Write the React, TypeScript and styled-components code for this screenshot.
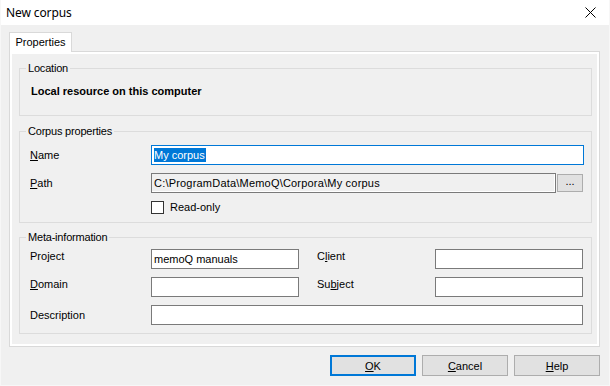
import React from 'react';
import styled, { createGlobalStyle, css } from 'styled-components';

const GlobalStyle = createGlobalStyle`
  html, body {
    margin: 0;
    padding: 0;
    background: #f0f0f0;
  }
  * {
    box-sizing: border-box;
  }
`;

const Window = styled.div`
  width: 610px;
  height: 386px;
  display: flex;
  flex-direction: column;
  background: #f0f0f0;
  border: 1px solid #f7f7f7;
  border-top: none;
  font-family: 'Liberation Sans', Arial, sans-serif;
  font-size: 11px;
  color: #000;
  overflow: hidden;
`;

const TitleBar = styled.div`
  height: 25px;
  flex: none;
  background: #fff;
  display: flex;
  align-items: center;
  justify-content: space-between;
  padding: 0 0 1px 5px;
`;

const Title = styled.div`
  font-family: 'Segoe UI', 'Noto Sans', 'Liberation Sans', sans-serif;
  font-size: 12px;
  letter-spacing: -0.1px;
`;

const CloseButton = styled.div`
  width: 46px;
  height: 25px;
  display: flex;
  align-items: center;
  justify-content: center;
  margin-right: -4px;
`;

const Body = styled.div`
  flex: 1;
  display: flex;
  flex-direction: column;
  padding: 7px 9px 0 8px;
`;

const TabStrip = styled.div`
  display: flex;
  height: 19px;
`;

const Tab = styled.div`
  width: 63px;
  height: 20px;
  background: #fff;
  border: 1px solid #d9d9d9;
  border-bottom: none;
  display: flex;
  align-items: center;
  justify-content: center;
  padding-bottom: 1px;
  position: relative;
  z-index: 1;
`;

const TabPanel = styled.div`
  height: 296px;
  border: 1px solid #d9d9d9;
  box-shadow: inset 0 0 0 2px #fff;
  background: #f0f0f0;
  padding: 9px 7px 0 9px;
  display: flex;
  flex-direction: column;
`;

const GroupBox = styled.fieldset<{ $height: number; $gap?: number }>`
  margin: ${p => p.$gap || 0}px 0 0 0;
  padding: 0 7px 0 10px;
  min-width: 0;
  height: ${p => p.$height}px;
  border: 1px solid #dcdcdc;
  display: block;
`;

const Legend = styled.legend`
  margin-left: -4px;
  padding: 0 2px 0 2px;
  line-height: 14px;
  height: 14px;
  font-size: 11px;
  letter-spacing: -0.2px;
`;

const LocationText = styled.div`
  margin-top: 9px;
  margin-left: 1px;
  font-weight: bold;
  line-height: 14px;
`;

const FormGrid = styled.div<{ $top: number }>`
  margin-top: ${p => p.$top}px;
  display: grid;
  grid-template-columns: 121px 1fr;
  row-gap: 8px;
`;

const MetaGrid = styled.div`
  margin-top: 5px;
  display: grid;
  grid-template-columns: 121px 148px 18px 118px 148px;
  grid-auto-rows: 20px;
  row-gap: 8px;
`;

const Label = styled.label<{ $raise?: boolean }>`
  line-height: 20px;
  white-space: nowrap;
  ${p =>
    p.$raise &&
    css`
      margin-top: -3px;
    `}
  u {
    text-decoration: underline;
    text-underline-offset: 1px;
  }
`;

const inputBase = css`
  height: 20px;
  border: 1px solid #7a7a7a;
  background: #fff;
  padding: 0 0 0 2px;
  display: flex;
  align-items: center;
  white-space: nowrap;
  overflow: hidden;
`;

const TextBox = styled.div<{ $focused?: boolean; $readOnly?: boolean; $span?: number }>`
  ${inputBase};
  ${p =>
    p.$span &&
    css`
      grid-column: span ${p.$span};
    `}
  ${p =>
    p.$focused &&
    css`
      border-color: #0078d7;
    `}
  ${p =>
    p.$readOnly &&
    css`
      background: #f0f0f0;
      box-shadow: inset -1px -1px 0 #fff;
      letter-spacing: 0.2px;
    `}
`;

const Selected = styled.span`
  background: #0078d7;
  color: #fff;
  line-height: 14px;
  padding: 0 1px 0 0;
`;

const PathRow = styled.div`
  display: grid;
  grid-template-columns: 1fr 26px;
  column-gap: 1px;
  margin-right: 1px;
  align-items: center;
`;

const BrowseButton = styled.div`
  height: 18px;
  background: #e1e1e1;
  border: 1px solid #adadad;
  display: flex;
  align-items: center;
  justify-content: center;
  padding-bottom: 4px;
  font-size: 11px;
`;

const CheckRow = styled.div`
  display: flex;
  align-items: center;
  gap: 6px;
  margin-top: -1px;
  height: 14px;
`;

const CheckBox = styled.div`
  width: 13px;
  height: 13px;
  border: 1px solid #333;
  background: #fff;
`;

const ButtonRow = styled.div`
  display: flex;
  justify-content: flex-end;
  gap: 6px;
  padding: 8px 0 0 0;
`;

const Button = styled.div<{ $default?: boolean }>`
  width: 86px;
  height: 21px;
  background: #e1e1e1;
  border: 1px solid #adadad;
  display: flex;
  align-items: center;
  justify-content: center;
  ${p =>
    p.$default &&
    css`
      border: 2px solid #0078d7;
    `}
  u {
    text-decoration: underline;
    text-underline-offset: 1px;
  }
`;

const CloseIcon = () => (
  <svg width="11" height="11" viewBox="0 0 11 11">
    <path d="M0.5 0.5 L10.5 10.5 M10.5 0.5 L0.5 10.5" stroke="#000" strokeWidth="1" fill="none" />
  </svg>
);

export default function App() {
  return (
    <>
      <GlobalStyle />
      <Window>
        <TitleBar>
          <Title>New corpus</Title>
          <CloseButton>
            <CloseIcon />
          </CloseButton>
        </TitleBar>
        <Body>
          <TabStrip>
            <Tab>Properties</Tab>
          </TabStrip>
          <TabPanel>
            <GroupBox $height={55}>
              <Legend>Location</Legend>
              <LocationText>Local resource on this computer</LocationText>
            </GroupBox>

            <GroupBox $height={99} $gap={8}>
              <Legend>Corpus properties</Legend>
              <FormGrid $top={7}>
                <Label>
                  <u>N</u>ame
                </Label>
                <TextBox $focused>
                  <Selected>My corpus</Selected>
                </TextBox>
                <Label>
                  <u>P</u>ath
                </Label>
                <PathRow>
                  <TextBox $readOnly>C:\ProgramData\MemoQ\Corpora\My corpus</TextBox>
                  <BrowseButton>...</BrowseButton>
                </PathRow>
                <div />
                <CheckRow>
                  <CheckBox />
                  <span>Read-only</span>
                </CheckRow>
              </FormGrid>
            </GroupBox>

            <GroupBox $height={104} $gap={7}>
              <Legend>Meta-information</Legend>
              <MetaGrid>
                <Label $raise>
                  Pro<u>j</u>ect
                </Label>
                <TextBox>memoQ manuals</TextBox>
                <div />
                <Label $raise>
                  C<u>l</u>ient
                </Label>
                <TextBox />

                <Label $raise>
                  <u>D</u>omain
                </Label>
                <TextBox />
                <div />
                <Label $raise>
                  Su<u>b</u>ject
                </Label>
                <TextBox />

                <Label>Description</Label>
                <TextBox $span={4} />
              </MetaGrid>
            </GroupBox>
          </TabPanel>
          <ButtonRow>
            <Button $default>
              <span>
                <u>O</u>K
              </span>
            </Button>
            <Button>
              <span>
                <u>C</u>ancel
              </span>
            </Button>
            <Button>
              <span>
                <u>H</u>elp
              </span>
            </Button>
          </ButtonRow>
        </Body>
      </Window>
    </>
  );
}
